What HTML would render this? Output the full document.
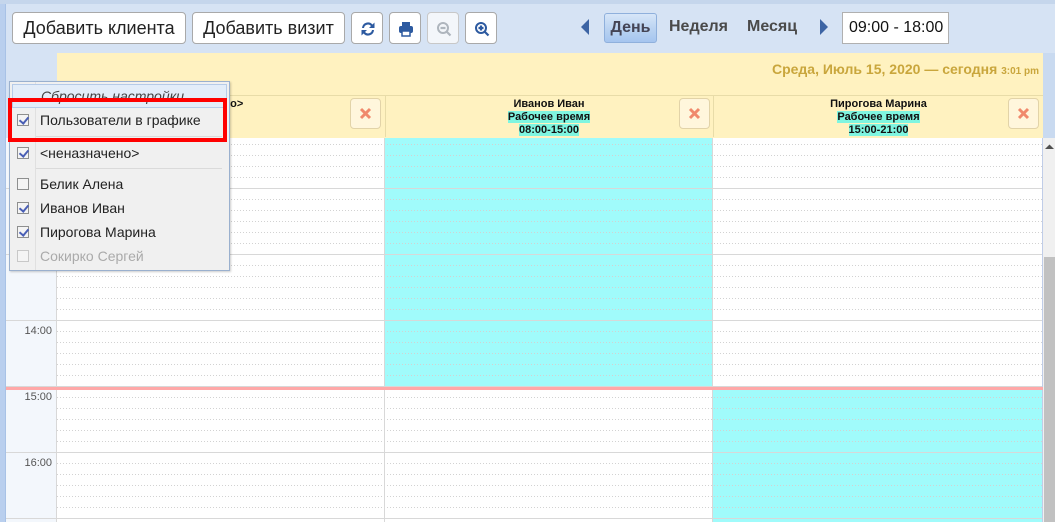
<!DOCTYPE html>
<html><head><meta charset="utf-8"><style>
*{box-sizing:border-box;margin:0;padding:0}
body{width:1055px;height:522px;overflow:hidden;position:relative;background:#d6e3f4;font-family:"Liberation Sans",Arial,sans-serif}
.abs{position:absolute}
.btn{position:absolute;top:12px;height:32px;background:#fff;border:1px solid #a9a9a9;border-radius:4px;font-size:18px;color:#222;line-height:30px;text-align:center}
.ib{width:32px}
.ib svg{position:absolute;left:7px;top:7px}
.ch{position:absolute;top:95px;height:42px;text-align:center;font-size:11px;font-weight:bold;color:#111;line-height:13px;padding-top:3px}
.hl{background:#7ff5e0}
.x{position:absolute;top:98px;width:31px;height:31px;border:1px solid #e2d3a8;border-radius:4px;background:#fff6dc}
.x svg{position:absolute;left:8px;top:8px}
.mi{position:absolute;left:10px;width:218px;height:24px;font-size:14px;color:#222;line-height:24px;padding-left:30px}
.cb{position:absolute;left:7px;top:6px;width:12px;height:12px;border:1px solid #8e8f8f;background:#f4f4f4}
.cb.on::after{content:"";position:absolute;left:3px;top:0px;width:4px;height:7px;border:solid #4a5fb5;border-width:0 2px 2px 0;transform:rotate(40deg)}
.tl{position:absolute;left:6px;width:46px;text-align:right;font-size:11px;color:#555}
</style></head><body>
<div class="abs" style="left:0;top:0;width:1055px;height:4px;background:#c5d6ec"></div>
<div class="abs" style="left:0;top:4px;width:6px;height:518px;background:#b9cfee;border-right:1px solid #a8c2e6"></div>

<div class="btn" style="left:12px;width:174px">Добавить клиента</div>
<div class="btn" style="left:192px;width:153px">Добавить визит</div>
<div class="btn ib" style="left:351px"><svg width="18" height="18" viewBox="0 0 18 18"><path d="M3 8a6 6 0 0 1 10.5-3.5L15.5 2.5V8H10l2-2A4 4 0 0 0 5 8z M15 10a6 6 0 0 1-10.5 3.5L2.5 15.5V10H8l-2 2a4 4 0 0 0 7-2z" fill="#2d5aa0"/></svg></div>
<div class="btn ib" style="left:389px"><svg width="18" height="18" viewBox="0 0 18 18"><rect x="5" y="2" width="8" height="4" fill="#2d5aa0"/><rect x="2" y="6" width="14" height="7" rx="2" fill="#2d5aa0"/><rect x="5" y="11" width="8" height="5" fill="#fff" stroke="#2d5aa0" stroke-width="1.5"/></svg></div>
<div class="btn ib" style="left:427px;background:#f3f6fa;border-color:#c8c8c8"><svg width="18" height="18" viewBox="0 0 18 18"><circle cx="8" cy="8" r="5" fill="none" stroke="#aeb5bd" stroke-width="2"/><path d="M5.5 8h5M11.5 11.5l4 4" stroke="#aeb5bd" stroke-width="2.2"/></svg></div>
<div class="btn ib" style="left:465px"><svg width="18" height="18" viewBox="0 0 18 18"><circle cx="8" cy="8" r="5" fill="none" stroke="#2d5aa0" stroke-width="2"/><path d="M5.5 8h5M8 5.5v5M11.5 11.5l4 4" stroke="#2d5aa0" stroke-width="2.2"/></svg></div>

<svg class="abs" style="left:580px;top:19px" width="10" height="16"><path d="M9 0L1 8l8 8z" fill="#3c64a4"/></svg>
<div class="abs" style="left:604px;top:13px;width:53px;height:30px;border:1px solid #8fb0dc;border-radius:3px;background:linear-gradient(#d7e6f8,#b9d2f1 55%,#a5c5ef);font-size:16px;font-weight:bold;color:#445;line-height:28px;text-align:center">День</div>
<div class="abs" style="left:669px;top:18px;font-size:16px;font-weight:bold;color:#4a4a4a">Неделя</div>
<div class="abs" style="left:747px;top:18px;font-size:16px;font-weight:bold;color:#4a4a4a">Месяц</div>
<svg class="abs" style="left:819px;top:19px" width="10" height="16"><path d="M1 0l8 8-8 8z" fill="#3c64a4"/></svg>
<div class="abs" style="left:842px;top:12px;width:107px;height:32px;background:#fff;border:1px solid #b0b0b0;font-size:16px;line-height:30px;padding-left:6px;color:#111">09:00 - 18:00</div>

<div class="abs" style="left:1043px;top:53px;width:12px;height:469px;background:#c9daf0"></div>
<div class="abs" style="left:57px;top:53px;width:986px;height:85px;background:#fff2c0"></div>
<div class="abs" style="left:57px;top:95px;width:986px;height:1px;background:#e8dca8"></div>
<div class="abs" style="right:16px;top:61px;font-size:14px;font-weight:bold;color:#c9a63c">Среда, Июль 15, 2020 — сегодня <span style="font-size:10px">3:01 pm</span></div>

<div class="ch" style="left:57px;width:327px;text-align:left;padding-left:104px">&lt;неназначено&gt;</div>
<div class="ch" style="left:385px;width:327px;border-left:1px solid #e8dca8">Иванов Иван<br><span class="hl">Рабочее время</span><br><span class="hl">08:00-15:00</span></div>
<div class="ch" style="left:713px;width:330px;border-left:1px solid #e8dca8">Пирогова Марина<br><span class="hl">Рабочее время</span><br><span class="hl">15:00-21:00</span></div>
<div class="x" style="left:350px"><svg width="13" height="13"><path d="M2 2l9 9M11 2l-9 9" stroke="#f0896c" stroke-width="3"/></svg></div>
<div class="x" style="left:679px"><svg width="13" height="13"><path d="M2 2l9 9M11 2l-9 9" stroke="#f0896c" stroke-width="3"/></svg></div>
<div class="x" style="left:1008px"><svg width="13" height="13"><path d="M2 2l9 9M11 2l-9 9" stroke="#f0896c" stroke-width="3"/></svg></div>

<div class="abs" style="left:6px;top:138px;width:51px;height:384px;background:#f3f7fc"></div>
<div class="abs" style="left:57px;top:138px;width:986px;height:384px;background:#fff"></div>
<div class="abs" style="left:385px;top:138px;width:327px;height:249px;background:#a0fbfb"></div>
<div class="abs" style="left:713px;top:390px;width:330px;height:132px;background:#a0fbfb"></div>
<svg class="abs" style="left:6px;top:138px" width="1037" height="384">
<defs><pattern id="p" x="0" y="50" width="1037" height="66" patternUnits="userSpaceOnUse">
<line x1="0" y1="0.5" x2="1037" y2="0.5" stroke="#d8d8d8"/>
<g stroke="#d2d2d2" stroke-dasharray="1 2"><line x1="51" y1="11.5" x2="1037" y2="11.5"/><line x1="51" y1="22.5" x2="1037" y2="22.5"/><line x1="51" y1="33.5" x2="1037" y2="33.5"/><line x1="51" y1="44.5" x2="1037" y2="44.5"/><line x1="51" y1="55.5" x2="1037" y2="55.5"/></g>
</pattern></defs>
<rect width="1037" height="384" fill="url(#p)"/>
<rect x="50" y="0" width="1" height="384" fill="#d8d8d8"/>
<rect x="378" y="0" width="1" height="384" fill="#d8d8d8"/>
<rect x="706" y="0" width="1" height="384" fill="#d8d8d8"/>
<rect x="1036" y="0" width="1" height="384" fill="#c0cde8"/>
</svg>
<div class="abs" style="left:6px;top:387px;width:1037px;height:3px;background:#ffa8a8"></div>
<div class="tl" style="top:325px">14:00</div>
<div class="tl" style="top:391px">15:00</div>
<div class="tl" style="top:457px">16:00</div>

<div class="abs" style="left:1043px;top:138px;width:12px;height:384px;background:#f0f0f0"></div>
<div class="abs" style="left:1044px;top:257px;width:11px;height:265px;background:#c1c1c1"></div>
<svg class="abs" style="left:1045px;top:144px" width="9" height="6"><path d="M0 5l4.5-4.5L9 5z" fill="#505050"/></svg>

<div class="abs" style="left:9px;top:81px;width:221px;height:190px;background:#f0f0f0;border:1px solid #9ab0ce;box-shadow:1px 1px 2px rgba(0,0,0,.2)"></div>
<div class="abs" style="left:35px;top:82px;width:1px;height:188px;background:#e0e0e0"></div>
<div class="abs" style="left:12px;top:84px;width:215px;height:24px;background:#e3edf9;border:1px solid #b6cbe8;font-size:14px;font-style:italic;color:#444;padding-left:28px;line-height:22px;overflow:hidden">Сбросить настройки</div>
<div class="mi" style="top:108px"><span class="cb on"></span>Пользователи в графике</div>
<div class="abs" style="left:36px;top:136px;width:186px;height:1px;background:#dadada"></div>
<div class="mi" style="top:141px"><span class="cb on"></span>&lt;неназначено&gt;</div>
<div class="abs" style="left:36px;top:168px;width:186px;height:1px;background:#dadada"></div>
<div class="mi" style="top:172px"><span class="cb"></span>Белик Алена</div>
<div class="mi" style="top:196px"><span class="cb on"></span>Иванов Иван</div>
<div class="mi" style="top:220px"><span class="cb on"></span>Пирогова Марина</div>
<div class="mi" style="top:244px;color:#aaa"><span class="cb" style="border-color:#c8c8c8"></span>Сокирко Сергей</div>
<div class="abs" style="left:8px;top:98px;width:219px;height:44px;border:4px solid #f00"></div>
</body></html>
